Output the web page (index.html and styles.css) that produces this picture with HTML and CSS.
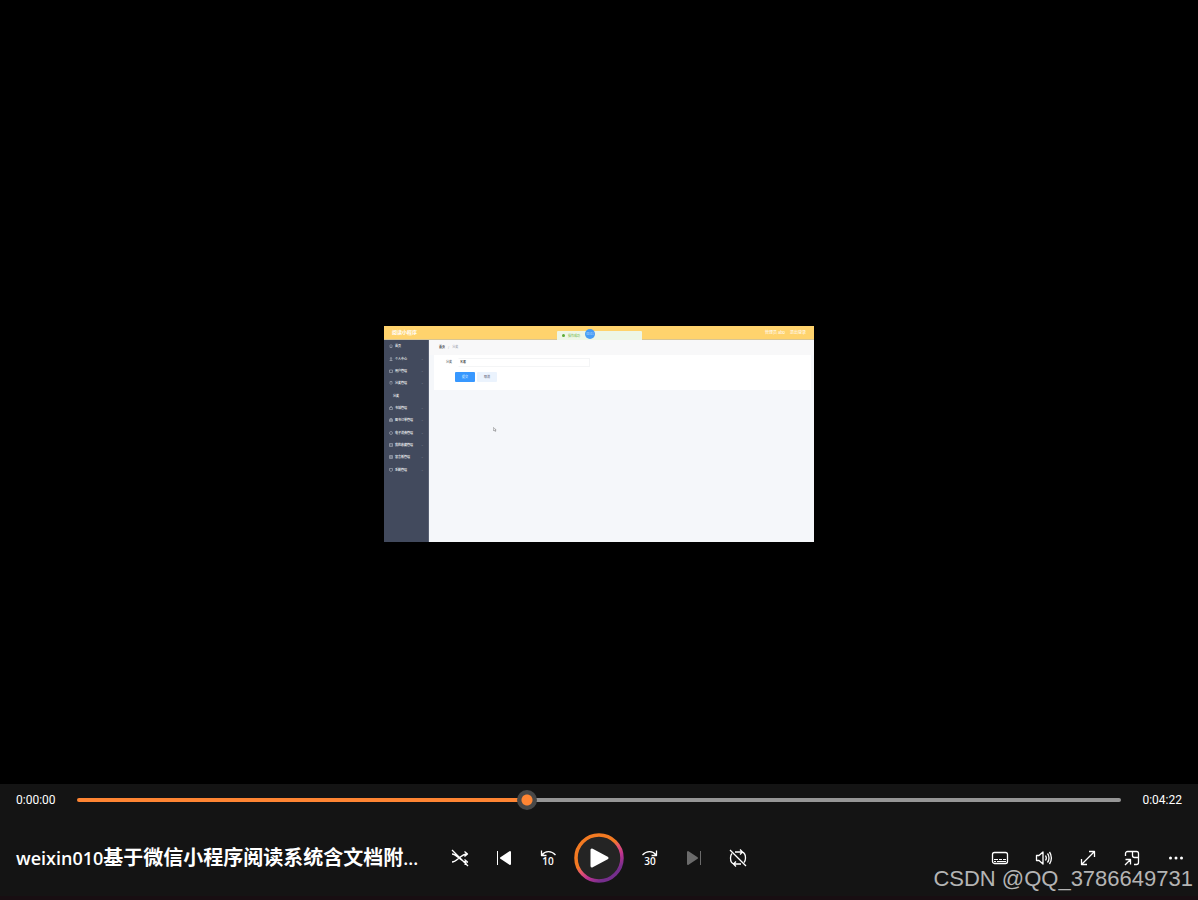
FILE: index.html
```html
<!DOCTYPE html>
<html lang="zh-CN">
<head>
<meta charset="utf-8">
<meta name="viewport" content="width=device-width, initial-scale=1">
<title>weixin010基于微信小程序阅读系统</title>
<link rel="stylesheet" href="styles.css">
</head>
<body>
<div class="player">
  <main class="stage">
    <section class="frame">
      <header class="app-bar">
        <strong class="app-name">阅读小程序</strong>
        <span>管理员 abo</span>
        <span>退出登录</span>
        <div class="toast"><i class="toast-dot"></i>操作成功</div>
        <div class="badge">00:01</div>
      </header>
      <div class="app-body">
        <nav class="menu">
          <span class="item"><svg viewBox="0 0 8 8"><path d="M1 4l3-3 3 3M2 4v3h4V4"/></svg>首页</span>
          <span class="item"><svg viewBox="0 0 8 8"><path d="M4 1a1.5 1.5 0 1 1 0 3a1.5 1.5 0 0 1 0-3M1 7h6M2 6h4"/></svg>个人中心<b>⌄</b></span>
          <span class="item"><svg viewBox="0 0 8 8"><path d="M1 2h6v5H1z"/></svg>用户管理<b>⌄</b></span>
          <span class="item"><svg viewBox="0 0 8 8"><path d="M2 1h4v4L4 7 2 5z"/></svg>分类管理<b>⌄</b></span>
          <span class="item sub">分类</span>
          <span class="item"><svg viewBox="0 0 8 8"><path d="M1 3h6v4H1zM3 3V1h3"/></svg>书城管理<b>⌄</b></span>
          <span class="item"><svg viewBox="0 0 8 8"><path d="M1 3h6v4H1zM1 5h6M2 3V1h4v2"/></svg>图书订单管理<b>⌄</b></span>
          <span class="item"><svg viewBox="0 0 8 8"><circle cx="4" cy="4" r="3"/></svg>电子消费管理<b>⌄</b></span>
          <span class="item"><svg viewBox="0 0 8 8"><path d="M1 1h6v6H1zM1 4h6"/></svg>我的收藏管理<b>⌄</b></span>
          <span class="item"><svg viewBox="0 0 8 8"><path d="M1 1h6v6H1zM1 4h6M4 1v6"/></svg>留言板管理<b>⌄</b></span>
          <span class="item"><svg viewBox="0 0 8 8"><path d="M1 1h6v4L4 7 1 5z"/></svg>系统管理<b>⌄</b></span>
        </nav>
        <div class="content">
          <div class="crumbs"><b>首页</b><span>/</span><span>分类</span></div>
          <form class="card">
            <label for="kind">分类</label>
            <input id="kind" class="field" type="text" value="名著">
            <div class="actions">
              <button type="button" class="btn primary">提交</button>
              <button type="button" class="btn">取消</button>
            </div>
          </form>
          <svg class="cursor" viewBox="0 0 10 12"><path d="M1 1v8l2-2 2 4 2-1-2-3h3z"/></svg>
        </div>
      </div>
    </section>
  </main>

  <footer class="controls">
    <div class="timeline">
      <span class="time">0:00:00</span>
      <input class="seek" type="range" min="0" max="1000" value="430" aria-label="进度">
      <span class="time end">0:04:22</span>
    </div>
    <div class="bar">
      <h1 class="title"><span class="latin">weixin010</span>基于微信小程序阅读系统含文档附<span class="latin">...</span></h1>
      <div class="group">
        <button class="ctl" aria-label="随机播放"><svg class="ico" viewBox="0 0 20 20"><path d="M2 6c5 0 9 8 14 8M2 14c5 0 9-8 15-8M14.500 3.500L17.500 6l-3 2.500M14.500 11.500l3 2.500-3 2.500M2 2l16 16"/></svg></button>
        <button class="ctl" aria-label="上一个"><svg class="ico" viewBox="0 0 20 20"><path class="thin" d="M3.500 3v14"/><path class="solid" d="M16 4v12L7 10z"/></svg></button>
        <button class="ctl" aria-label="后退 10 秒"><svg class="ico" viewBox="0 0 20 20"><path d="M3.500 2.500v5h5M4 7c3-4 9-5 13.500 0"/><text x="10" y="17">10</text></svg></button>
        <button class="play" aria-label="播放"><svg viewBox="0 0 50 50"><defs><linearGradient id="ring" x1="0.200" y1="0.100" x2="0.800" y2="0.950"><stop offset="0.380" stop-color="#f37a22"/><stop offset="0.500" stop-color="#e8596a"/><stop offset="0.680" stop-color="#bd3390"/><stop offset="0.900" stop-color="#752e8c"/></linearGradient></defs><circle cx="25" cy="25" r="23" fill="#242424" stroke="url(#ring)" stroke-width="3.500"/><path d="M18 17v16L33 25z" fill="#fff" stroke="#fff" stroke-width="3" stroke-linejoin="round"/></svg></button>
        <button class="ctl" aria-label="前进 30 秒"><svg class="ico" viewBox="0 0 20 20"><path d="M16.500 2.500v5h-5M16 7c-3-4-9-5-13.500 0"/><text x="10" y="17">30</text></svg></button>
        <button class="ctl off" aria-label="下一个" disabled><svg class="ico" viewBox="0 0 20 20"><path class="solid" d="M4 4v12l9-6z"/><path class="thin" d="M16.500 3v14"/></svg></button>
        <button class="ctl" aria-label="循环"><svg class="ico" viewBox="0 0 20 20"><path d="M7 4h7M12 1.500L14.500 4 12 6.500M14 4c2 .5 3.500 2.500 3.500 6 0 2-.5 3.500-1.500 4.500M13 16H6M8 13.500L5.500 16 8 18.500M6 16c-2-.5-3.500-2.500-3.500-6 0-2 .5-3.500 1.500-4.500M2 2l16 16"/></svg></button>
      </div>
      <div class="group right">
        <button class="ctl" aria-label="字幕"><svg class="ico" viewBox="0 0 20 20"><rect x="2.500" y="4.500" width="15" height="11" rx="2"/><path class="thin" d="M4 11.500h4M9 11.500h3M13 11.500h3M4 13.500h2M7 13.500h9"/></svg></button>
        <button class="ctl" aria-label="音量"><svg class="ico" viewBox="0 0 20 20"><path d="M2.500 7.500v5h2.500l4 3.500V4L5 7.500zM11.500 7.500c1 1.500 1 3.500 0 5M13.500 5.500c2 2.500 2 6.500 0 9M15.500 4c2.500 3.500 2.500 8.500 0 12"/></svg></button>
        <button class="ctl" aria-label="全屏"><svg class="ico" viewBox="0 0 20 20"><path d="M11 3.500h5.500V9M16.500 3.500l-13 13M3.500 11v5.500H9"/></svg></button>
        <button class="ctl" aria-label="迷你播放器"><svg class="ico" viewBox="0 0 20 20"><path d="M3.500 8V5.500a2 2 0 0 1 2-2h9a2 2 0 0 1 2 2v9a2 2 0 0 1-2 2H12M10.500 3.500v4a2 2 0 0 0 2 2h4M3.500 11.500h5v5M8.500 11.500L3 17"/></svg></button>
        <button class="ctl" aria-label="更多"><svg class="ico dots" viewBox="0 0 20 20"><circle cx="4.500" cy="10" r="1.500"/><circle cx="10" cy="10" r="1.500"/><circle cx="15.500" cy="10" r="1.500"/></svg></button>
      </div>
    </div>
    <div class="watermark">CSDN @QQ_3786649731</div>
  </footer>
</div>
</body>
</html>
```
FILE: styles.css
```css
* { box-sizing: border-box; }
body {
  margin: 0;
  background: #000;
  color: #fff;
  font-family: "Open Sans", "Noto Sans CJK SC", sans-serif;
}
button { font: inherit; color: inherit; border: 0; padding: 0; background: none; }
.player { min-height: 100vh; display: flex; flex-direction: column; }
.stage { flex: 1; display: grid; place-items: center; padding-top: 84px; }

/* recorded application */
.frame {
  width: 35.9%;
  aspect-ratio: 430 / 216;
  display: flex;
  flex-direction: column;
  background: #f5f7fa;
  font: 500 3px/4px "Noto Sans CJK SC", sans-serif;
}
.app-bar {
  position: relative;
  height: 14px;
  display: flex;
  align-items: center;
  gap: 5px;
  padding: 0 8px;
  background: #ffd36d;
  border-bottom: 1px solid #d8c595;
  font-size: 4px;
  font-weight: 400;
}
.app-name { margin-right: auto; font-size: 5px; line-height: 8px; }
.toast {
  position: absolute;
  left: 173px;
  top: 5px;
  width: 85px;
  height: 10px;
  display: flex;
  align-items: center;
  gap: 3px;
  padding-left: 5px;
  background: #edf6e6;
  color: #67b238;
  border-radius: 1px;
  font-size: 3px;
}
.toast-dot { width: 3px; height: 3px; border-radius: 50%; background: #5cab35; }
.badge {
  position: absolute;
  left: 201px;
  top: 3px;
  width: 10px;
  height: 10px;
  border-radius: 50%;
  background: #459df5;
  color: #b9dcff;
  font-size: 3px;
  line-height: 10px;
  text-align: center;
}
.app-body { flex: 1; display: flex; }
.menu {
  width: 45px;
  display: grid;
  grid-template-rows: repeat(11, 1fr);
  padding-bottom: 66px;
  background: #424a5d;
  color: #fff;
  border-right: 1px solid #596174;
}
.item { display: flex; align-items: center; gap: 2px; padding: 0 4px 0 5px; white-space: nowrap; }
.item svg { width: 4px; height: 4px; fill: none; stroke: #c3c7cf; }
.item b { margin-left: auto; color: #9298a5; font-weight: 400; }
.sub { padding-left: 9px; }
.content { flex: 1; position: relative; }
.crumbs { height: 15px; display: flex; align-items: center; gap: 3px; padding-left: 10px; color: #a4a9b4; background: #f8f8f9; }
.crumbs b { color: #303133; }
.card {
  display: grid;
  grid-template-columns: 12px 132px;
  align-items: center;
  gap: 5px 0;
  margin: 0 3px 0 5px;
  padding: 3px 0 8px 12px;
  background: #fff;
  color: #606266;
}
.field {
  width: 100%;
  height: 9px;
  padding: 0 0 0 1px;
  border: 1px solid #f4f5f6;
  border-left-color: #fff;
  font: inherit;
  color: #333;
}
.actions { grid-column: 1 / -1; display: flex; gap: 2px; padding-left: 9px; }
.btn { width: 20px; height: 10px; border-radius: 1px; background: #ebf3fd; color: #667; line-height: 10px; }
.primary { background: #3898ff; color: #d9edff; }
.cursor { position: absolute; left: 64px; top: 87px; width: 4px; height: 5px; fill: #fff; stroke: #555; }

/* player controls */
.controls { position: relative; background: #141414; border-bottom: 4px solid #180e12; }
.timeline { height: 32px; display: flex; align-items: center; padding: 0 16px; }
.time { width: 61px; font: 12px/16px Roboto, sans-serif; }
.end { text-align: right; }
.seek {
  flex: 1;
  min-width: 0;
  height: 22px;
  margin: 0;
  appearance: none;
  background: none;
}
.seek::-webkit-slider-runnable-track {
  height: 4px;
  border-radius: 2px;
  background: linear-gradient(90deg, #ff8533 43%, #969696 43%);
}
.seek::-webkit-slider-thumb {
  appearance: none;
  width: 20px;
  height: 20px;
  margin-top: -8px;
  border-radius: 50%;
  background: radial-gradient(circle, #ff8533 5px, #484848 6px);
}
.bar {
  height: 80px;
  display: grid;
  grid-template-columns: 1fr auto 1fr;
  align-items: center;
  padding: 12px 0 8px;
}
.title {
  margin: 0;
  padding-left: 16px;
  font-size: 20px;
  line-height: 28px;
  font-weight: 600;
  white-space: nowrap;
  min-width: 0;
}
.latin { font-size: 18px; }
.group { display: flex; align-items: center; }
.right { justify-content: flex-end; }
.ctl { width: 44px; height: 44px; display: grid; place-items: center; }
.ico { width: 20px; height: 20px; fill: none; stroke: #fff; stroke-width: 1.3; stroke-linejoin: round; }
.ico text { fill: #fff; stroke: none; font: 600 10px "Open Sans", sans-serif; text-anchor: middle; }
.ico .solid { fill: #fff; stroke-width: 2; }
.ico .thin { stroke-width: 1; }
.dots { fill: #fff; stroke: none; }
.off .ico, .off .ico .solid { stroke: #6b6b6b; fill: #6b6b6b; }
.play { width: 50px; height: 50px; margin: 0 4px; }
.play svg { display: block; }
.watermark {
  position: absolute;
  right: 5px;
  bottom: 3px;
  color: #b4b4b4;
  font: 22px/28px "Liberation Sans", Arial, sans-serif;
}
```
